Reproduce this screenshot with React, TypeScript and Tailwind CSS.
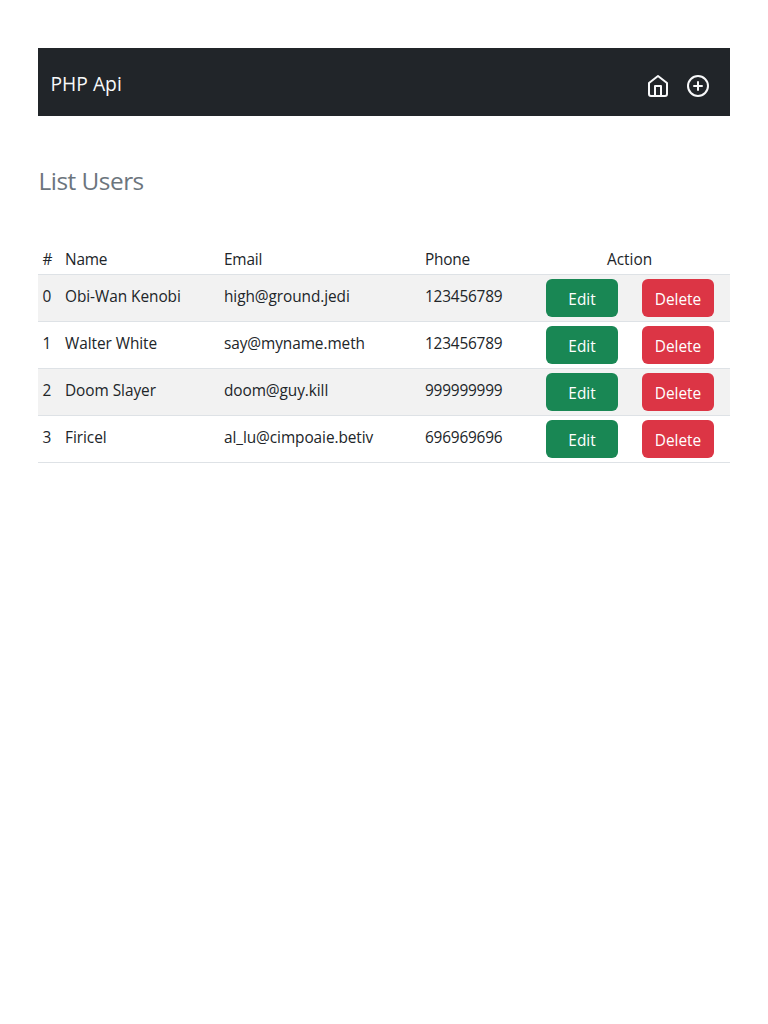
import React from "react";

interface User {
  id: number;
  name: string;
  email: string;
  phone: string;
}

const users: User[] = [
  { id: 0, name: "Obi-Wan Kenobi", email: "high@ground.jedi", phone: "123456789" },
  { id: 1, name: "Walter White", email: "say@myname.meth", phone: "123456789" },
  { id: 2, name: "Doom Slayer", email: "doom@guy.kill", phone: "999999999" },
  { id: 3, name: "Firicel", email: "al_lu@cimpoaie.betiv", phone: "696969696" },
];

const columns = "grid grid-cols-[23px_159px_201px_117px_192px] border-b border-[#dee2e6]";

function HomeIcon() {
  return (
    <svg width="24" height="24" viewBox="0 0 24 24" fill="none" stroke="currentColor" strokeWidth="2" strokeLinecap="round" strokeLinejoin="round">
      <path d="M3 9l9-7 9 7v11a2 2 0 0 1-2 2H5a2 2 0 0 1-2-2z" />
      <polyline points="9 22 9 12 15 12 15 22" />
    </svg>
  );
}

function PlusCircleIcon() {
  return (
    <svg width="24" height="24" viewBox="0 0 24 24" fill="none" stroke="currentColor" strokeWidth="2" strokeLinecap="round" strokeLinejoin="round">
      <circle cx="12" cy="12" r="10" />
      <line x1="12" y1="8" x2="12" y2="16" />
      <line x1="8" y1="12" x2="16" y2="12" />
    </svg>
  );
}

function UserRow({ user }: { user: User }) {
  return (
    <div className={`${columns} h-[47px] odd:bg-white even:bg-[#f2f2f2]`}>
      <div className="pl-[4.5px] pt-[10px]">{user.id}</div>
      <div className="pl-1 pt-[10px] tracking-[-0.05px]">{user.name}</div>
      <div className="pl-1 pt-[10px] tracking-[-0.08px]">{user.email}</div>
      <div className="pl-1 pt-[10px] tracking-[-0.2px]">{user.phone}</div>
      <div className="flex gap-6 pl-2 pt-1">
        <button className="h-[38px] w-[72px] rounded-md bg-[#198754] pt-[3px] text-white">Edit</button>
        <button className="h-[38px] w-[72px] rounded-md bg-[#dc3545] pt-[3px] text-white">Delete</button>
      </div>
    </div>
  );
}

export default function App() {
  return (
    <main className="min-h-screen bg-white px-[38px] pt-12 font-['Open_Sans','Noto_Sans',sans-serif] text-[15.4px] leading-6 text-[#212529]">
      <nav className="flex h-[68px] items-center justify-between bg-[#212529] pl-[12.5px] pr-5 text-[#f8f9fa]">
        <span className="pb-[1px] pt-[4px] text-[19.3px] leading-[30px]">PHP Api</span>
        <div className="flex gap-4 pt-2">
          <a href="#"><HomeIcon /></a>
          <a href="#"><PlusCircleIcon /></a>
        </div>
      </nav>
      <h1 className="mt-12 pl-[0.5px] text-[24.4px] leading-[34px] tracking-[-0.5px] text-[#6c757d]">List Users</h1>
      <section className="mt-11">
        <div className={`${columns} h-[33px] pt-[6px]`}>
          <div className="pl-[4.5px]">#</div>
          <div className="pl-1 tracking-[-0.2px]">Name</div>
          <div className="pl-1 tracking-[-0.2px]">Email</div>
          <div className="pl-1 tracking-[-0.2px]">Phone</div>
          <div className="pr-[9px] text-center">Action</div>
        </div>
        {users.map((user) => (
          <UserRow key={user.id} user={user} />
        ))}
      </section>
    </main>
  );
}
